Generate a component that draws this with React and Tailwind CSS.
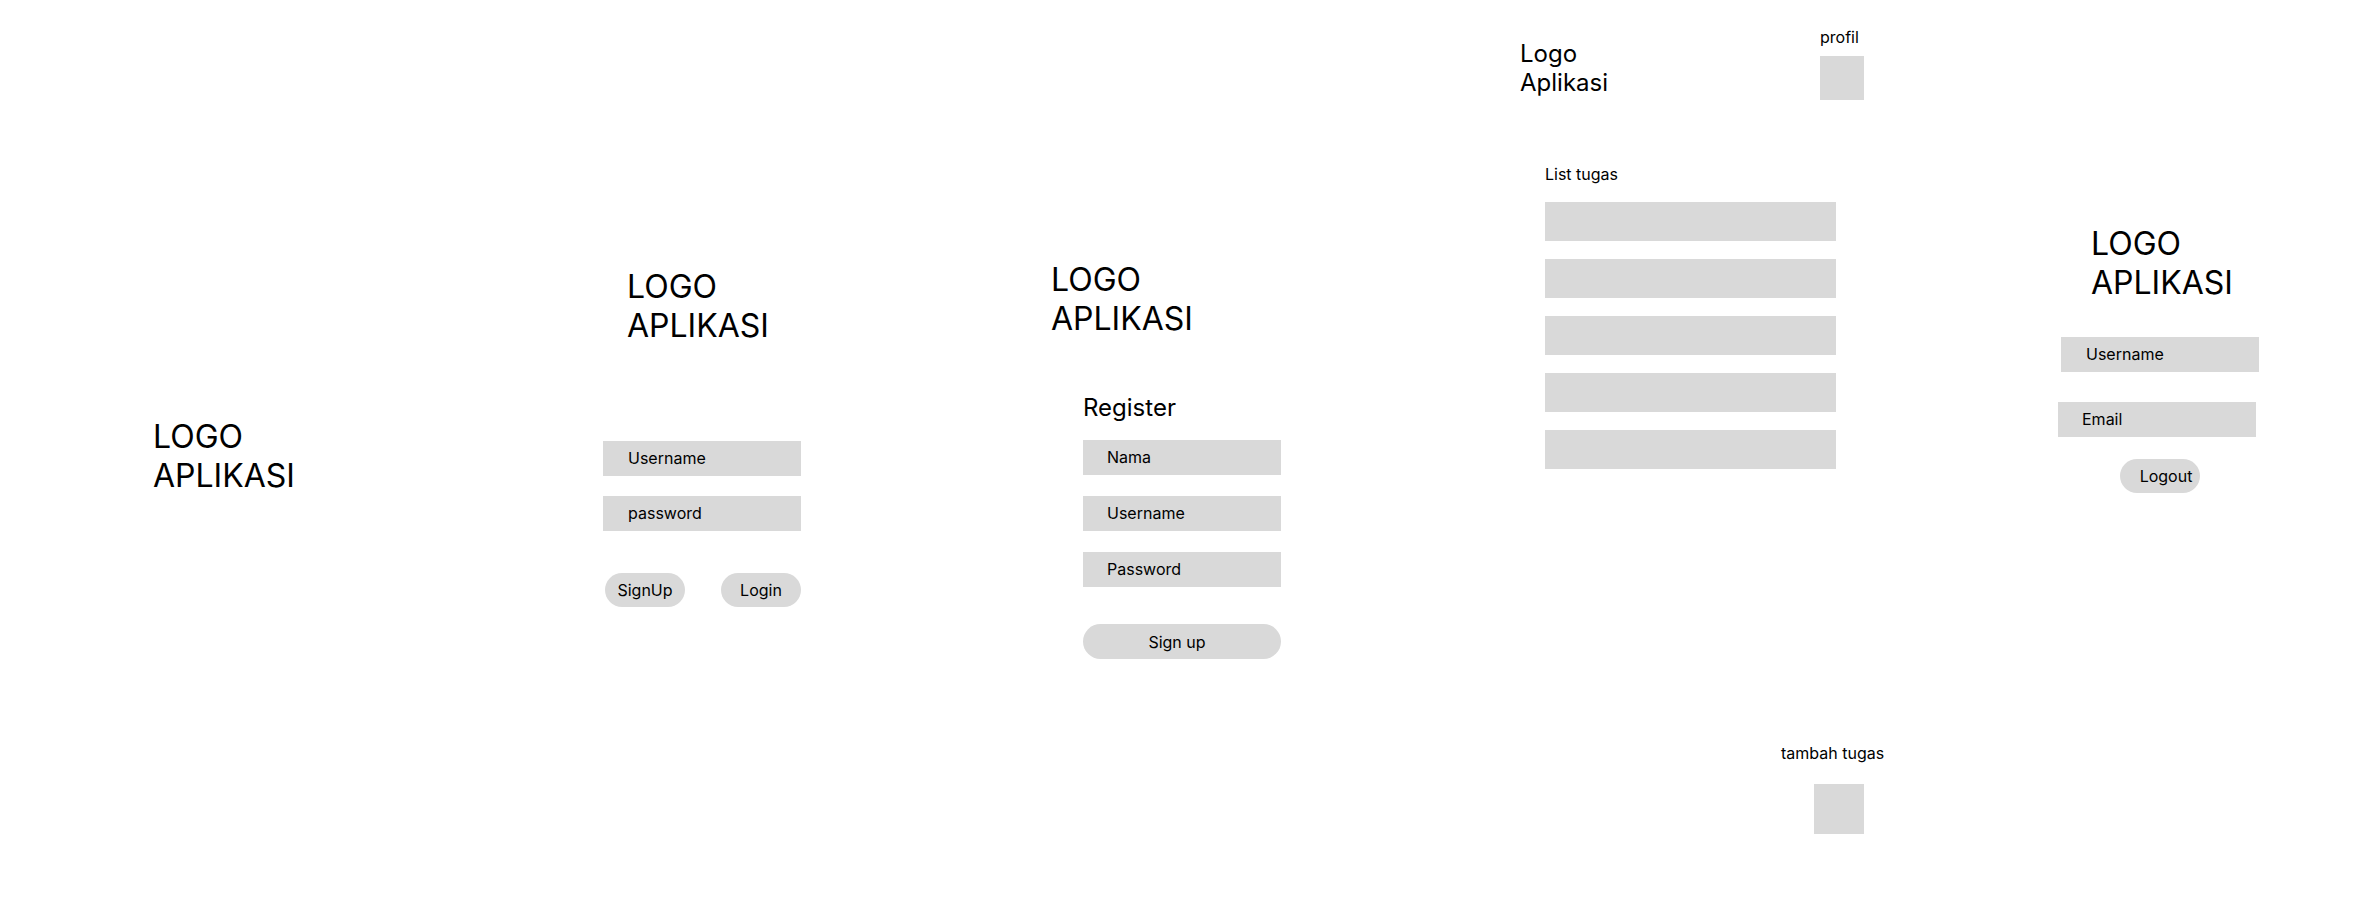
import React from "react";

const font = { fontFamily: "Inter, 'Noto Sans', sans-serif" };

const Field = ({ label, className = "" }) => (
  <div className={`w-[198px] h-[35px] bg-[#d9d9d9] flex items-center text-[16px] leading-[19px] ${className}`}>
    {label}
  </div>
);

const Logo = ({ className = "" }) => (
  <div className={`text-[32px] leading-[39px] ${className}`}>
    LOGO
    <br />
    APLIKASI
  </div>
);

const App = () => {
  return (
    <div className="relative w-[2356px] h-[917px] bg-white text-black overflow-hidden" style={font}>
      {/* Splash */}
      <div className="absolute left-[153px] top-[417px]">
        <Logo />
      </div>

      {/* Login */}
      <div className="absolute left-[603px] top-[267px] flex flex-col">
        <Logo className="ml-[24px]" />
        <Field label="Username" className="mt-[96px] pl-[25px]" />
        <Field label="password" className="mt-[20px] pl-[25px]" />
        <div className="mt-[42px] flex w-[198px]">
          <div className="ml-[2px] w-[80px] h-[34px] rounded-full bg-[#d9d9d9] flex items-center justify-center text-[16px]">
            SignUp
          </div>
          <div className="ml-auto w-[80px] h-[34px] rounded-full bg-[#d9d9d9] flex items-center justify-center text-[16px]">
            Login
          </div>
        </div>
      </div>

      {/* Register */}
      <div className="absolute left-[1051px] top-[260px] flex flex-col">
        <Logo />
        <div className="ml-[32px] mt-[55px] flex flex-col">
          <div className="text-[24px] leading-[29px]">Register</div>
          <Field label="Nama" className="mt-[18px] pl-[24px]" />
          <Field label="Username" className="mt-[21px] pl-[24px]" />
          <Field label="Password" className="mt-[21px] pl-[24px]" />
          <div className="mt-[37px] w-[198px] h-[35px] rounded-full bg-[#d9d9d9] flex items-center justify-center pr-[10px] text-[16px]">
            Sign up
          </div>
        </div>
      </div>

      {/* List tugas */}
      <div className="absolute left-[1520px] top-[28px] w-[344px] flex flex-col">
        <div className="flex items-start justify-between">
          <div className="mt-[11px] text-[24px] leading-[29px]">
            Logo
            <br />
            Aplikasi
          </div>
          <div className="flex flex-col">
            <div className="text-[16px] leading-[19px]">profil</div>
            <div className="mt-[9px] w-[44px] h-[44px] bg-[#d9d9d9]" />
          </div>
        </div>
        <div className="ml-[25px] mt-[65px] text-[16px] leading-[19px]">List tugas</div>
        <div className="ml-[25px] mt-[18px] flex flex-col gap-[18px]">
          {[0, 1, 2, 3, 4].map((i) => (
            <div key={i} className="w-[291px] h-[39px] bg-[#d9d9d9]" />
          ))}
        </div>
        <div className="ml-[261px] mt-[275px] text-[16px] leading-[19px] whitespace-nowrap">tambah tugas</div>
        <div className="ml-[294px] mt-[21px] w-[50px] h-[50px] bg-[#d9d9d9]" />
      </div>

      {/* Profil */}
      <div className="absolute left-[2058px] top-[224px] flex flex-col">
        <Logo className="ml-[33px]" />
        <Field label="Username" className="mt-[35px] ml-[3px] pl-[25px]" />
        <Field label="Email" className="mt-[30px] pl-[24px]" />
        <div className="mt-[22px] ml-[62px] w-[80px] h-[34px] rounded-full bg-[#d9d9d9] flex items-center justify-center pl-[12px] text-[16px]">
          Logout
        </div>
      </div>
    </div>
  );
};

export default App;
